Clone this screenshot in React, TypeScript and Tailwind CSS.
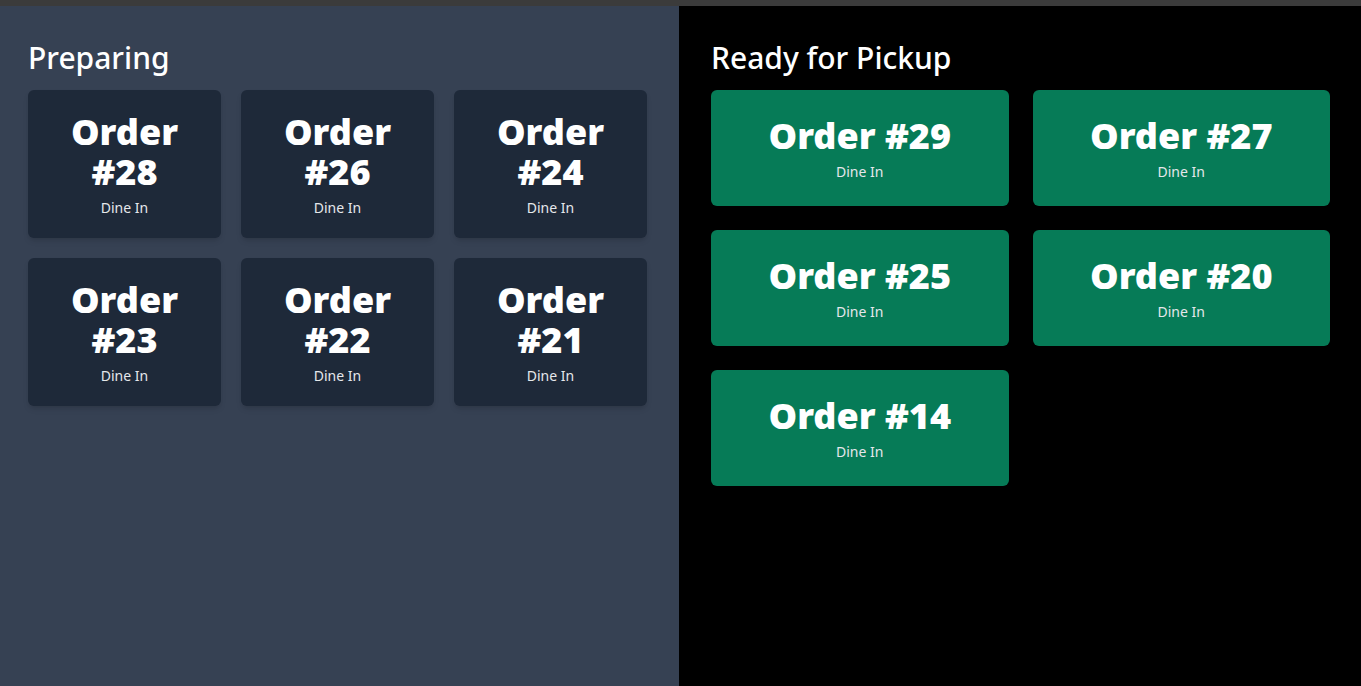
import React from 'react';

const preparing = [28, 26, 24, 23, 22, 21];
const ready = [29, 27, 25, 20, 14];

const font = { fontFamily: '"Noto Sans", "Open Sans", sans-serif' };

const App = () => {
    return (
        <div className="h-[686px] w-full flex flex-col bg-black overflow-hidden" style={font}>
            <div className="h-[6px] bg-[#3b3b3b] shrink-0" />
            <div className="flex-1 grid grid-cols-[679px_1fr]">
                {/* preparing column */}
                <div className="bg-gray-700 pl-7 pr-8 pt-[34px]">
                    <h2 className="text-3xl font-medium text-white mb-[14px]">Preparing</h2>
                    <div className="grid grid-cols-3 gap-5">
                        {preparing.map((n) => (
                            <div key={n} className="bg-gray-800 rounded-md shadow-md px-4 pt-[22px] pb-5 text-center">
                                <div className="text-4xl leading-10 font-black text-white">Order #{n}</div>
                                <div className="mt-1.5 text-sm text-gray-200">Dine In</div>
                            </div>
                        ))}
                    </div>
                </div>

                {/* ready column */}
                <div className="bg-black pl-8 pr-[31px] pt-[34px]">
                    <h2 className="text-3xl font-medium text-white mb-[14px]">Ready for Pickup</h2>
                    <div className="grid grid-cols-2 gap-6">
                        {ready.map((n) => (
                            <div key={n} className="bg-[#067b57] rounded-md shadow-md px-6 pt-[26px] pb-6 text-center">
                                <div className="text-4xl leading-10 font-black text-white">Order #{n}</div>
                                <div className="mt-1.5 text-sm text-gray-200">Dine In</div>
                            </div>
                        ))}
                    </div>
                </div>
            </div>
        </div>
    );
};

export default App;
